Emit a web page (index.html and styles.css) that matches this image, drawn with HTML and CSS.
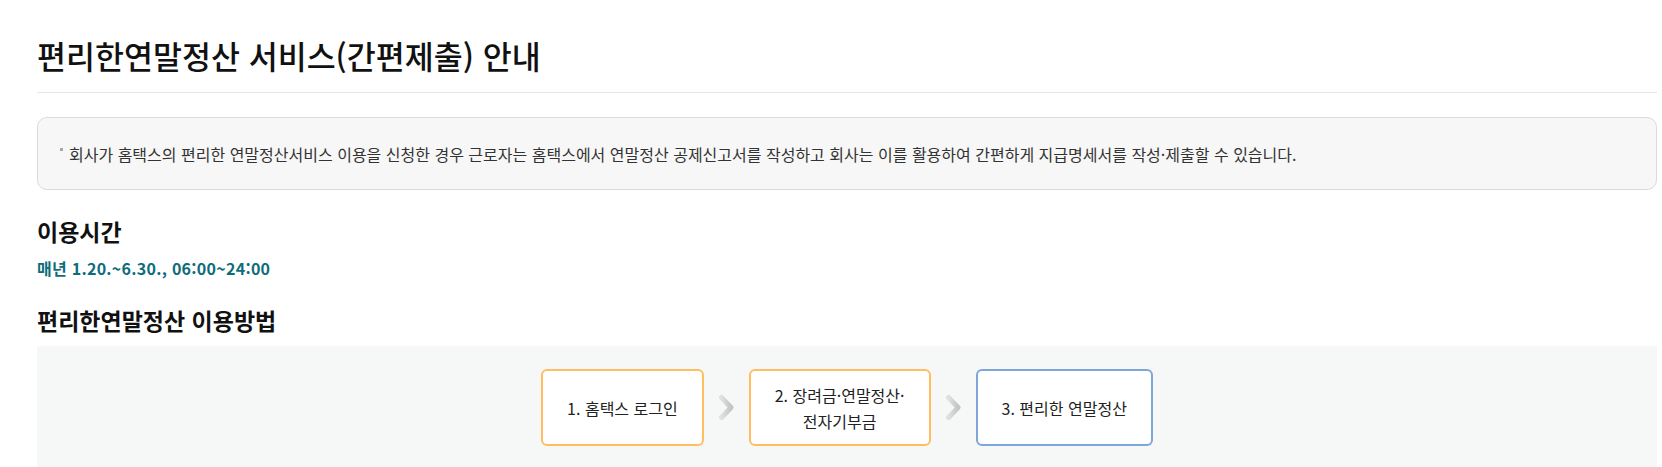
FILE: index.html
```html
<!DOCTYPE html>
<html lang="ko">
<head>
    <meta charset="UTF-8">
    <meta name="viewport" content="width=device-width, initial-scale=1.0">
    <title>편리한연말정산 서비스(간편제출) 안내</title>
    <link rel="stylesheet" href="styles.css">
</head>
<body>
    <div class="container">
        <h1 class="page-title">편리한연말정산 서비스(간편제출) 안내</h1>

        <!-- 안내 문구 -->
        <div class="notice">
            <p class="notice-item">회사가 홈택스의 편리한 연말정산서비스 이용을 신청한 경우 근로자는 홈택스에서 연말정산 공제신고서를 작성하고 회사는 이를 활용하여 간편하게 지급명세서를 작성·제출할 수 있습니다.</p>
        </div>

        <!-- 이용시간 -->
        <h2 class="section-title">이용시간</h2>
        <p class="time-text">매년 1.20.~6.30., 06:00~24:00</p>

        <!-- 이용방법 -->
        <h2 class="section-title">편리한연말정산 이용방법</h2>
        <div class="steps">
            <div class="step">1. 홈택스 로그인</div>
            <span class="step-arrow">
                <svg width="17" height="27" viewBox="0 0 17 27">
                    <defs>
                        <linearGradient id="arrowGrad" x1="0" y1="0" x2="1" y2="0">
                            <stop offset="0" stop-color="#e0e0e0"/>
                            <stop offset="1" stop-color="#c4c4c4"/>
                        </linearGradient>
                    </defs>
                    <polyline points="3.5,3.5 13,13.5 3.5,23.5" fill="none" stroke="url(#arrowGrad)" stroke-width="5" stroke-linecap="round" stroke-linejoin="round"/>
                </svg>
            </span>
            <div class="step">2. 장려금·연말정산·<br>전자기부금</div>
            <span class="step-arrow">
                <svg width="17" height="27" viewBox="0 0 17 27">
                    <polyline points="3.5,3.5 13,13.5 3.5,23.5" fill="none" stroke="url(#arrowGrad)" stroke-width="5" stroke-linecap="round" stroke-linejoin="round"/>
                </svg>
            </span>
            <div class="step step-final">3. 편리한 연말정산</div>
        </div>
    </div>
</body>
</html>
```

FILE: styles.css
```css
* {
    margin: 0;
    padding: 0;
    box-sizing: border-box;
}

body {
    font-family: 'Noto Sans CJK KR', 'Noto Sans', sans-serif;
    color: #222;
    background: #fff;
}

.container {
    padding: 0 5px 0 37px;
}

.page-title {
    font-size: 31.5px;
    font-weight: 500;
    line-height: 44px;
    color: #111;
    padding-top: 33px;
    padding-bottom: 15px;
    border-bottom: 1px solid #e3e5e8;
}

.notice {
    margin-top: 24px;
    height: 73px;
    padding: 0 20px;
    display: flex;
    align-items: center;
    background: #f7f7f7;
    border: 1px solid #dadada;
    border-radius: 10px;
}

.notice-item {
    position: relative;
    padding-left: 11px;
    font-size: 16px;
    line-height: 22px;
    color: #333;
}

.notice-item::before {
    content: '';
    position: absolute;
    left: 2px;
    top: 5px;
    width: 3px;
    height: 3px;
    background: #a8a8a8;
}

.section-title {
    margin-top: 26px;
    font-size: 23px;
    font-weight: 700;
    line-height: 30px;
    color: #111;
}

.time-text {
    margin-top: 11px;
    font-size: 16px;
    font-weight: 700;
    line-height: 22px;
    letter-spacing: 0.27px;
    color: #0e6c7a;
}

.steps {
    margin-top: 11px;
    padding: 23px 0 30px;
    background: #f6f7f7;
    display: flex;
    justify-content: center;
    align-items: center;
    gap: 14px;
}

.step {
    height: 77px;
    padding: 0 24px;
    display: flex;
    align-items: center;
    justify-content: center;
    text-align: center;
    font-size: 16px;
    line-height: 26px;
    color: #222;
    background: #fff;
    border: 2px solid #ffbf5e;
    border-radius: 6px;
}

.step-final {
    border-color: #7ea6d8;
}

.step-arrow {
    display: flex;
    width: 17px;
}
```
